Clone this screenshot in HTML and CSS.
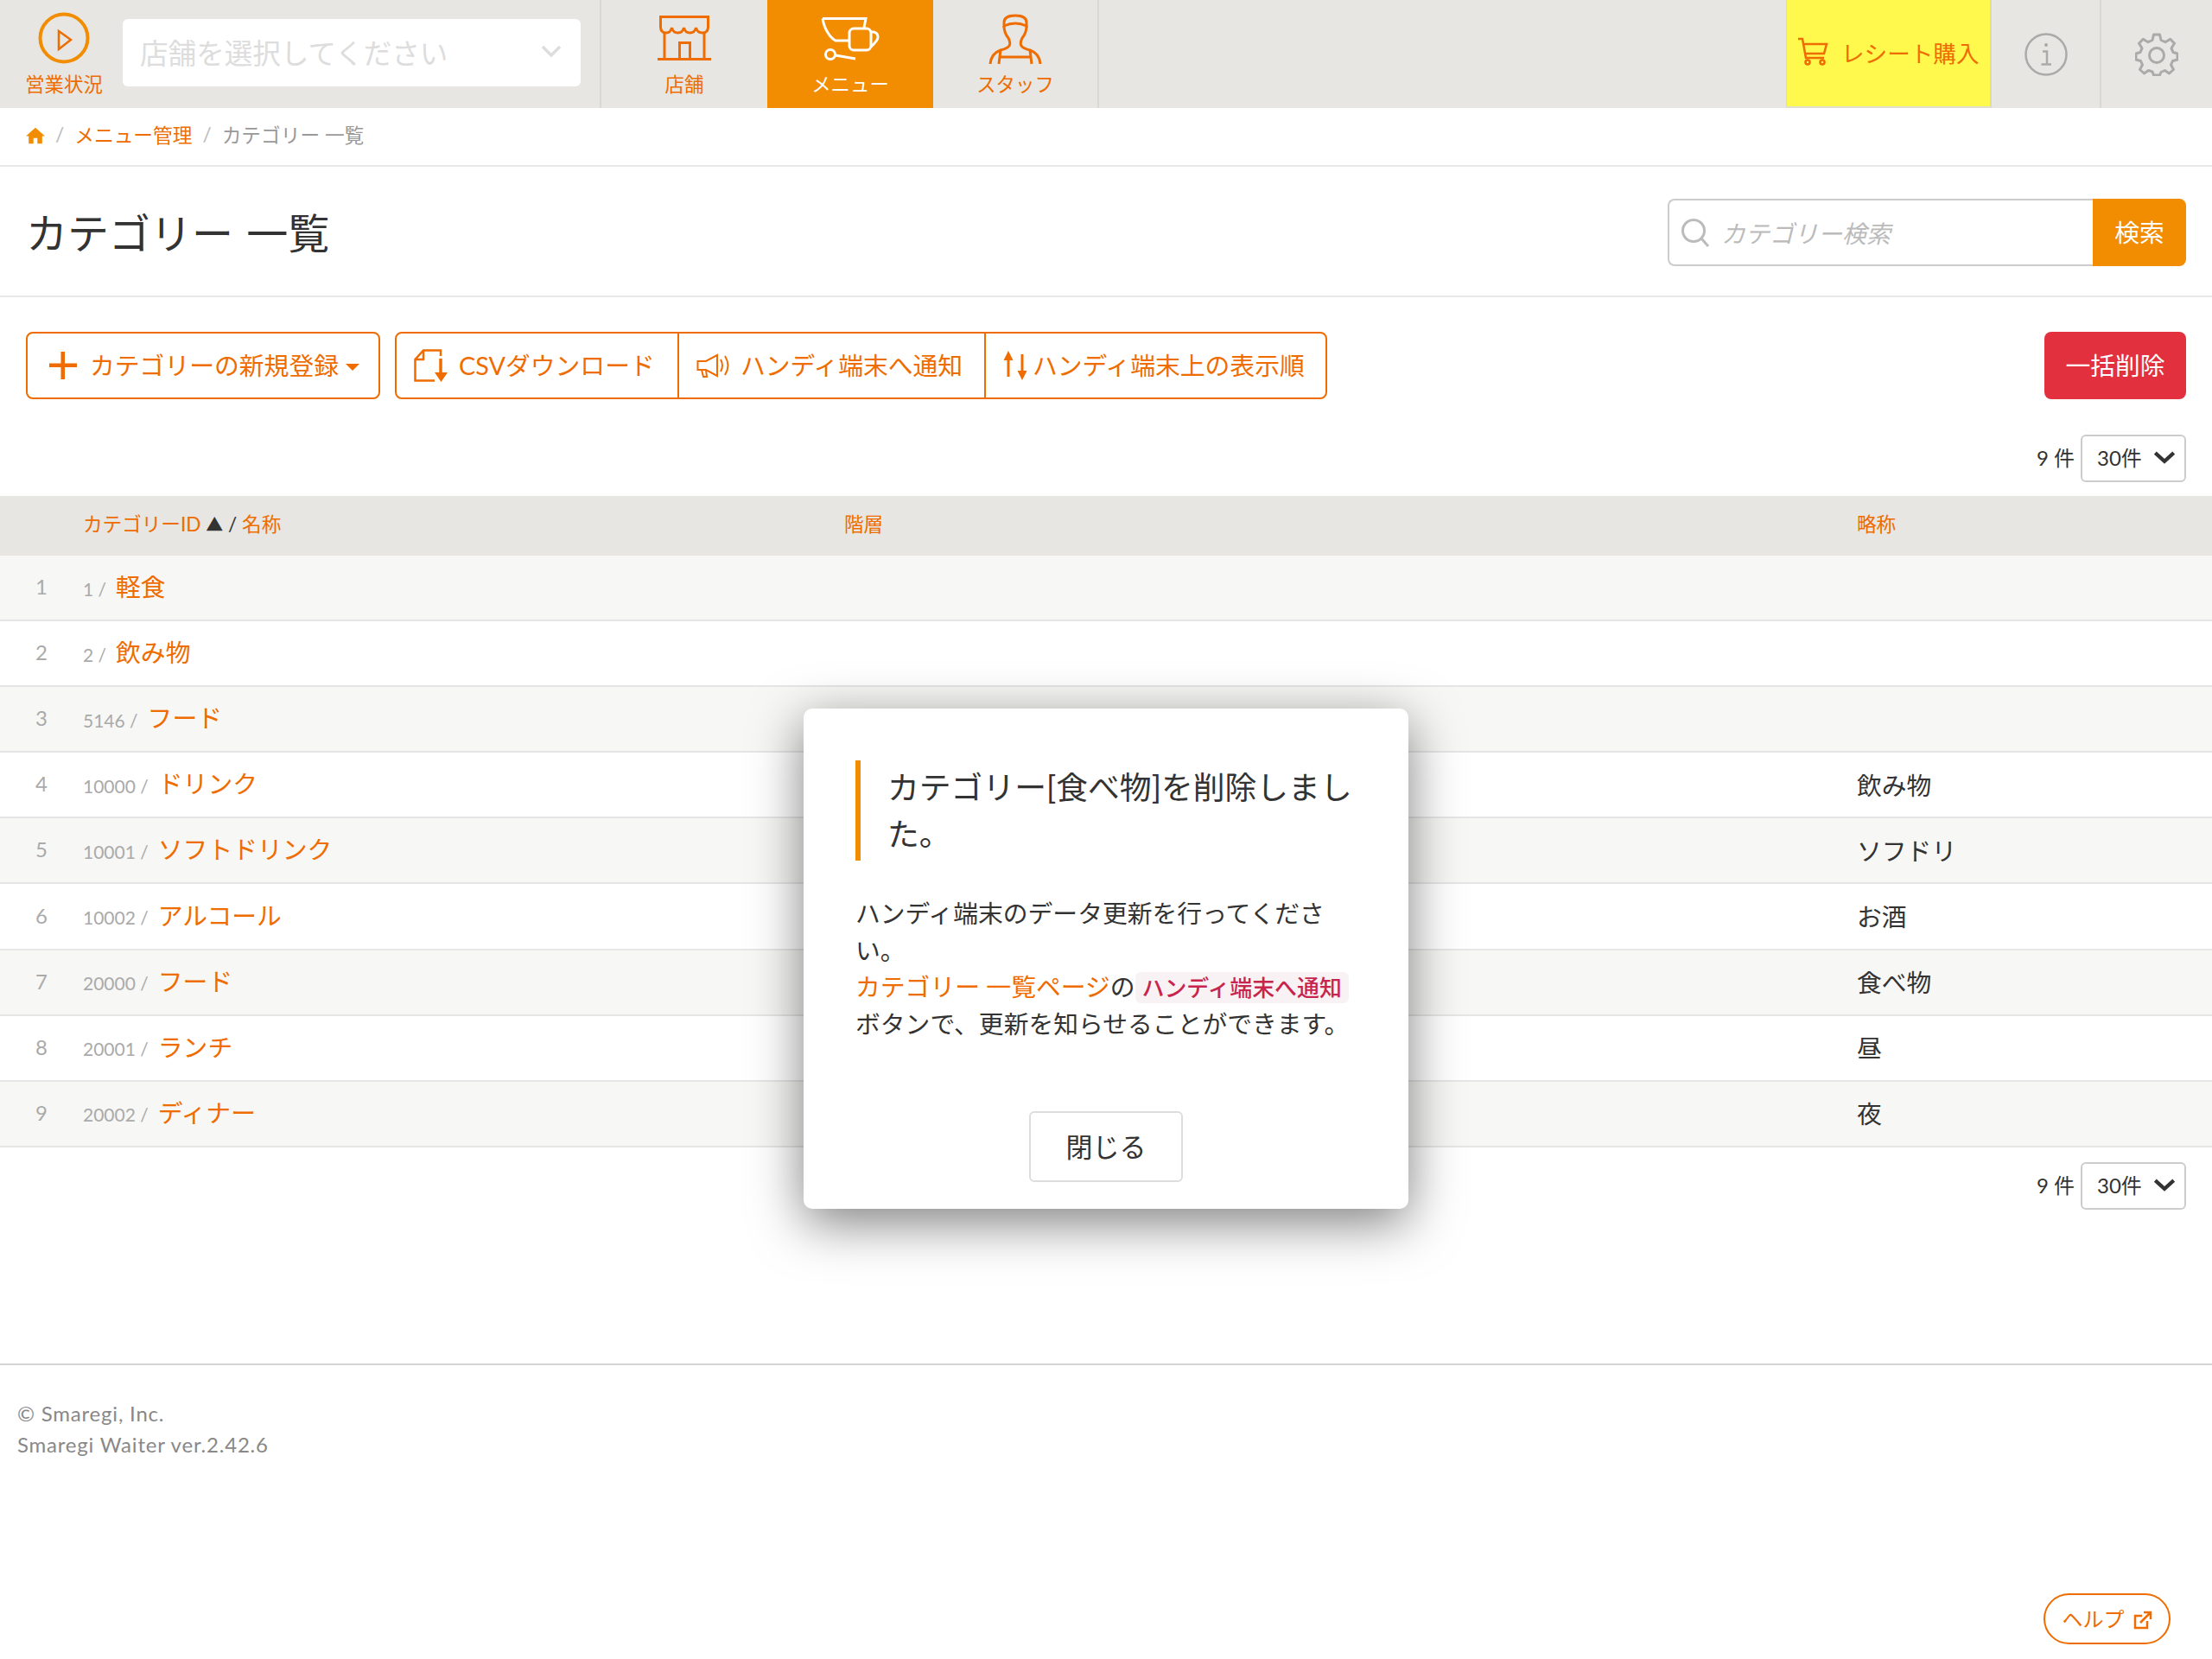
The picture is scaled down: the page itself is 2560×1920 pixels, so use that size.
FILE: index.html
```html
<!DOCTYPE html>
<html lang="ja">
<head>
  <meta charset="UTF-8" />
  <title>カテゴリー 一覧</title>
  <link rel="stylesheet" href="styles.css">
</head>
<body>

<header class="topbar">
  <div class="status">
    <svg class="status-icon" viewBox="0 0 60 60">
      <circle cx="30" cy="30" r="27.5" fill="none" stroke="#f28c00" stroke-width="4"/>
      <path d="M24 22 L38 32 L24 43 Z" fill="none" stroke="#ee6c00" stroke-width="2.5"/>
    </svg>
    <span>営業状況</span>
  </div>
  <div class="store-select">
    <span>店舗を選択してください</span>
    <svg class="store-chevron" viewBox="0 0 24 14"><path d="M2 2 L12 12 L22 2" fill="none" stroke="#ddd" stroke-width="3.5"/></svg>
  </div>
  <nav class="nav">
    <a class="nav-item">
      <svg class="nav-icon" viewBox="0 0 64 60" fill="none" stroke="#ee6c00" stroke-width="3">
        <path d="M4.500 3.500 H59.500 V15 Q59.500 22 53 22 Q47 22 45.500 16 Q44 22 38.500 22 Q33 22 31.500 16 Q30 22 24.500 22 Q19 22 17.500 16 Q16 22 11 22 Q4.500 22 4.500 15 Z"/>
        <path d="M9 22 V52 M55 22 V52 M1 52.500 H63"/>
        <path d="M26.500 52 V33.500 H38.500 V52"/>
      </svg>
      <span>店舗</span>
    </a>
    <a class="nav-item nav-item-active">
      <svg class="nav-icon" viewBox="0 0 70 60" fill="none" stroke="#fff" stroke-width="3">
        <path d="M3 5.500 H53 L51 16 M3 5.500 C5 18 12 28 18 31 H34"/>
        <rect x="34" y="17" width="25" height="25" rx="5"/>
        <path d="M59 21 H62 Q67 22 67 27 Q67 31 59 38"/>
        <circle cx="12" cy="47" r="5.500"/>
        <path d="M18 48 L41 52"/>
      </svg>
      <span>メニュー</span>
    </a>
    <a class="nav-item">
      <svg class="nav-icon" viewBox="0 0 62 60" fill="none" stroke="#ee6c00" stroke-width="3">
        <path d="M18 14 V10 Q18 2 31 2 Q44 2 44 10 V14 Q31 8 18 14 Z"/>
        <path d="M18 14 Q18 22 23 28 Q26 34 24 37 Q22 40 14 42 Q3 46 2 58 M44 14 Q44 22 39 28 Q36 34 38 37 Q40 40 48 42 Q59 46 60 58"/>
        <path d="M14 42 L12 58 M48 42 L50 58 M14 50 H48"/>
      </svg>
      <span>スタッフ</span>
    </a>
  </nav>
  <div class="topbar-right">
    <a class="buy">
      <svg class="buy-icon" viewBox="0 0 36 34" fill="none" stroke="#ee6c00" stroke-width="2.5">
        <path d="M1 2 H6 L10 24 H31 M7.500 8 H34 L31 19 H9"/>
        <circle cx="12" cy="29" r="2.500"/>
        <circle cx="29" cy="29" r="2.500"/>
      </svg>
      <span>レシート購入</span>
    </a>
    <a class="tool">
      <svg class="tool-icon" viewBox="0 0 50 50" fill="none" stroke="#aaa" stroke-width="2.5">
        <circle cx="25" cy="25" r="23.500"/>
        <circle cx="25" cy="14" r="2" fill="#aaa" stroke="none"/>
        <path d="M21 21.500 H26 V36 M19.500 36.500 H31"/>
      </svg>
    </a>
    <a class="tool tool-last">
      <svg class="tool-icon" viewBox="0 0 50 50" fill="none" stroke="#aaa" stroke-width="3">
        <path d="M21.500 2 H28.500 L30 8.500 L35 10.700 L40.700 7.200 L45.500 12.300 L42 17.800 L44 22.500 L49 24 V31 L43.500 32.500 L41.500 37 L44.500 42.500 L39.500 47 L34.500 43.500 L30 45.500 L28.500 49 H21.500 L20 45 L15.500 43.500 L10.500 47 L5.500 42.500 L8.500 37 L6.500 32.500 L1 31 V24 L6 22.500 L8 17.800 L4.500 12.300 L9.300 7.200 L15 10.700 L20 8.500 Z" stroke-linejoin="round"/>
        <circle cx="25" cy="26" r="8.500"/>
      </svg>
    </a>
  </div>
</header>

<div class="breadcrumb">
  <svg class="home-icon" viewBox="0 0 24 20"><path d="M12 0 L24 10.500 H20.500 V20 H14.500 V13 H9.500 V20 H3.500 V10.500 H0 Z" fill="#f28c00"/></svg>
  <span class="crumb-sep">/</span>
  <a class="crumb-link">メニュー管理</a>
  <span class="crumb-sep">/</span>
  <span class="crumb-current">カテゴリー 一覧</span>
</div>

<div class="title-row">
  <h1>カテゴリー 一覧</h1>
  <div class="search">
    <div class="search-box">
      <svg class="search-icon" viewBox="0 0 34 34" fill="none" stroke="#bbb" stroke-width="3">
        <circle cx="15" cy="15" r="12.500"/>
        <path d="M24 24 L32 33"/>
      </svg>
      <span>カテゴリー検索</span>
    </div>
    <a class="search-btn">検索</a>
  </div>
</div>

<div class="toolbar">
  <a class="btn btn-new">
    <svg class="plus-icon" viewBox="0 0 32 32"><path d="M13.500 0 H18 V13.500 H32 V18 H18 V32 H13.500 V18 H0 V13.500 H13.500 Z" fill="#ee6c00"/></svg>
    <span>カテゴリーの新規登録</span>
    <i class="caret"></i>
  </a>
  <div class="btn-group">
    <a class="btn-part btn-csv">
      <svg class="csv-icon" viewBox="0 0 40 38" fill="none" stroke="#ee6c00" stroke-width="2.500">
        <path d="M31 8 V1.500 H11 L1.500 12 V36.500 H24 M11 1.500 V12 H1.500"/>
        <path d="M31 11 V28" stroke-width="3.500"/>
        <path d="M24 27 H39 L31.500 38 Z" fill="#ee6c00" stroke="none"/>
      </svg>
      <span>CSVダウンロード</span>
    </a>
    <a class="btn-part btn-notify">
      <svg class="horn-icon" viewBox="0 0 40 28" fill="none" stroke="#ee6c00" stroke-width="2">
        <path d="M1.500 9 H11 L24 2 V26 L11 19 H1.500 Z M6 19 L8 27 H12 L11 19"/>
        <path d="M28 7 Q32 14 28 21 M33 3 Q40 14 33 25"/>
      </svg>
      <span>ハンディ端末へ通知</span>
    </a>
    <a class="btn-part btn-order">
      <svg class="arrows-icon" viewBox="0 0 30 34" fill="#ee6c00">
        <path d="M6 0 L11.500 11 H7.500 V30 H4.500 V11 H0.500 Z"/>
        <path d="M22 34 L16.500 23 H20.500 V4 H23.500 V23 H27.500 Z"/>
      </svg>
      <span>ハンディ端末上の表示順</span>
    </a>
  </div>
  <a class="btn-delete">一括削除</a>
</div>

<div class="count-row">
  <span>9 件</span>
  <div class="page-size">
    <span>30件</span>
    <svg class="page-chevron" viewBox="0 0 24 14"><path d="M2 2 L12 11 L22 2" fill="none" stroke="#333" stroke-width="4"/></svg>
  </div>
</div>

<div class="list">
  <div class="list-head">
    <span></span>
    <span class="head-name"><a>カテゴリーID</a> <i class="sort-mark">▲</i> / <a>名称</a></span>
    <a>階層</a>
    <a>略称</a>
  </div>
  <div class="list-row"><span class="row-no">1</span><span class="row-name"><small>1 /</small><a>軽食</a></span><span></span><span></span></div>
  <div class="list-row"><span class="row-no">2</span><span class="row-name"><small>2 /</small><a>飲み物</a></span><span></span><span></span></div>
  <div class="list-row"><span class="row-no">3</span><span class="row-name"><small>5146 /</small><a>フード</a></span><span></span><span></span></div>
  <div class="list-row"><span class="row-no">4</span><span class="row-name"><small>10000 /</small><a>ドリンク</a></span><span></span><span class="row-short">飲み物</span></div>
  <div class="list-row"><span class="row-no">5</span><span class="row-name"><small>10001 /</small><a>ソフトドリンク</a></span><span></span><span class="row-short">ソフドリ</span></div>
  <div class="list-row"><span class="row-no">6</span><span class="row-name"><small>10002 /</small><a>アルコール</a></span><span></span><span class="row-short">お酒</span></div>
  <div class="list-row"><span class="row-no">7</span><span class="row-name"><small>20000 /</small><a>フード</a></span><span></span><span class="row-short">食べ物</span></div>
  <div class="list-row"><span class="row-no">8</span><span class="row-name"><small>20001 /</small><a>ランチ</a></span><span></span><span class="row-short">昼</span></div>
  <div class="list-row"><span class="row-no">9</span><span class="row-name"><small>20002 /</small><a>ディナー</a></span><span></span><span class="row-short">夜</span></div>
</div>

<div class="count-row count-row-bottom">
  <span>9 件</span>
  <div class="page-size">
    <span>30件</span>
    <svg class="page-chevron" viewBox="0 0 24 14"><path d="M2 2 L12 11 L22 2" fill="none" stroke="#333" stroke-width="4"/></svg>
  </div>
</div>

<footer class="footer">
  <div>© Smaregi, Inc.</div>
  <div>Smaregi Waiter ver.2.42.6</div>
</footer>

<a class="help">
  <span>ヘルプ</span>
  <svg class="help-icon" viewBox="0 0 22 22" fill="none" stroke="#ee6c00" stroke-width="2.500">
    <path d="M16 12 V20 H2 V6 H10"/>
    <path d="M8 14 L19 3 M12 2 H20 V10"/>
  </svg>
</a>

<div class="modal">
  <h2 class="modal-title">カテゴリー[食べ物]を削除しました。</h2>
  <p class="modal-body">
    ハンディ端末のデータ更新を行ってください。<br>
    <a>カテゴリー 一覧ページ</a>の<code>ハンディ端末へ通知</code><br>
    ボタンで、更新を知らせることができます。
  </p>
  <div class="modal-foot">
    <a class="modal-close">閉じる</a>
  </div>
</div>

</body>
</html>
```

FILE: styles.css
```css
* {
  box-sizing: border-box;
}
body {
  margin: 0;
  min-height: 1920px;
  position: relative;
  font-family: Lato, "Noto Sans CJK JP", sans-serif;
  font-size: 28.8px;
  color: #333;
  background: #fff;
}
a {
  color: #ee6c00;
  text-decoration: none;
}

/* top bar */
.topbar {
  display: flex;
  height: 125px;
  background: #e7e6e2;
}
.status {
  width: 142px;
  padding: 14px 0 0 6px;
  display: flex;
  flex-direction: column;
  align-items: center;
  font-size: 22.4px;
  line-height: 30px;
  color: #ee6c00;
}
.status-icon {
  width: 60px;
  height: 60px;
  margin-bottom: 9px;
}
.store-select {
  width: 530px;
  height: 78px;
  margin-top: 22px;
  padding: 0 20px 4px;
  background: #fff;
  border-radius: 6px;
  display: flex;
  align-items: center;
  justify-content: space-between;
  font-size: 32.6px;
  color: #ddd;
}
.store-chevron {
  width: 24px;
  height: 14px;
  margin-right: 2px;
}
.nav {
  display: flex;
  margin-left: 22px;
  border-left: 2px solid #d8d8d4;
}
.nav-item {
  width: 192px;
  padding-top: 16px;
  display: flex;
  flex-direction: column;
  align-items: center;
  font-size: 22.4px;
  line-height: 30px;
  color: #ee6c00;
}
.nav-item:last-child {
  border-right: 2px solid #d8d8d4;
}
.nav-item-active {
  background: #f28c00;
  color: #fff;
}
.nav-icon {
  height: 60px;
  width: 70px;
  margin-bottom: 7px;
}
.topbar-right {
  margin-left: auto;
  display: flex;
}
.buy {
  width: 238px;
  padding: 0 0 3px 12px;
  display: flex;
  align-items: center;
  gap: 15px;
  background: #fff94d;
  border-left: 1px solid #d8d8d4;
  border-right: 2px solid #d8d8d4;
  border-bottom: 2px solid #e0e0d0;
  font-size: 26.6px;
}
.buy-icon {
  width: 36px;
  height: 34px;
}
.tool {
  width: 125px;
  display: flex;
  align-items: center;
  justify-content: center;
}
.tool-last {
  width: 130px;
  border-left: 2px solid #d8d8d4;
}
.tool-icon {
  width: 50px;
  height: 50px;
}

/* breadcrumb */
.breadcrumb {
  height: 68px;
  padding: 0 30px;
  display: flex;
  align-items: center;
  gap: 12px;
  border-bottom: 2px solid #e8e8e8;
  font-size: 22.7px;
}
.breadcrumb span,
.breadcrumb a {
  padding-bottom: 5px;
}
.home-icon {
  width: 22px;
  height: 20px;
  margin-top: -2px;
}
.crumb-sep {
  color: #bbb;
}
.crumb-current {
  color: #999;
}

/* title */
.title-row {
  height: 151px;
  padding: 2px 30px 0;
  display: flex;
  align-items: center;
  justify-content: space-between;
  border-bottom: 2px solid #e8e8e8;
}
h1 {
  margin: 0;
  padding-bottom: 3px;
  font-size: 48px;
  font-weight: 400;
  word-spacing: 3px;
}
.search {
  display: flex;
  width: 600px;
  height: 78px;
}
.search-box {
  flex: 1;
  padding-left: 13px;
  display: flex;
  align-items: center;
  gap: 13px;
  border: 2px solid #ccc;
  border-right: none;
  border-radius: 8px 0 0 8px;
  font-size: 28px;
  font-style: italic;
  color: #bbb;
}
.search-btn {
  width: 108px;
  padding-bottom: 3px;
  display: flex;
  align-items: center;
  justify-content: center;
  background: #f28c00;
  border-radius: 0 8px 8px 0;
  color: #fff;
}
.search-icon {
  width: 34px;
  height: 34px;
}

/* toolbar */
.toolbar {
  display: flex;
  margin-top: 40px;
  padding: 0 30px;
  height: 78px;
}
.btn {
  width: 410px;
  padding: 0 0 3px 25px;
  display: flex;
  align-items: center;
  border: 2px solid #ee6c00;
  border-radius: 8px;
}
.plus-icon {
  width: 32px;
  height: 32px;
  margin: 3px 15px 0 0;
}
.caret {
  margin: 7px 0 0 8px;
  border-top: 8px solid #ee6c00;
  border-left: 8px solid transparent;
  border-right: 8px solid transparent;
}
.btn-group {
  display: flex;
  width: 1079px;
  margin-left: 17px;
  border: 2px solid #ee6c00;
  border-radius: 8px;
}
.btn-part {
  display: flex;
  align-items: center;
}
.btn-part span {
  padding-bottom: 3px;
}
.btn-csv {
  width: 325px;
  padding-left: 20px;
  gap: 12px;
}
.btn-notify {
  width: 355px;
  padding-left: 20px;
  gap: 11px;
  border-left: 2px solid #ee6c00;
}
.btn-order {
  flex: 1;
  padding-left: 20px;
  gap: 4px;
  border-left: 2px solid #ee6c00;
}
.csv-icon {
  width: 40px;
  height: 38px;
}
.horn-icon {
  width: 40px;
  height: 28px;
}
.arrows-icon {
  width: 30px;
  height: 34px;
}
.btn-delete {
  width: 164px;
  margin-left: auto;
  padding-bottom: 3px;
  display: flex;
  align-items: center;
  justify-content: center;
  background: #e3303f;
  border-radius: 8px;
  color: #fff;
}

/* page size */
.count-row {
  display: flex;
  justify-content: flex-end;
  align-items: center;
  gap: 7px;
  margin: 41px 0 16px;
  padding: 0 30px;
  font-size: 24px;
}
.count-row span {
  padding-bottom: 4px;
}
.count-row-bottom {
  margin: 17px 0 178px;
}
.page-size {
  width: 122px;
  height: 55px;
  padding: 0 10px 0 17px;
  display: flex;
  align-items: center;
  justify-content: space-between;
  border: 2px solid #ccc;
  border-radius: 6px;
}
.page-chevron {
  width: 26px;
  height: 15px;
  margin-bottom: 2px;
}

/* list */
.list-head,
.list-row {
  display: grid;
  grid-template-columns: 96px 881px 1172px 1fr;
  align-items: center;
}
.list-head {
  height: 69px;
  padding-bottom: 6px;
  background: #e7e6e2;
  font-size: 22.6px;
}
.head-name {
  color: #333;
}
.sort-mark {
  font-size: 20px;
  font-style: normal;
}
.list-row {
  height: 76.1px;
  border-bottom: 2px solid #e6e6e6;
}
.list-row:nth-child(even) {
  background: #f7f7f5;
}
.row-no {
  padding-bottom: 3px;
  text-align: center;
  font-size: 24px;
  color: #aaa;
}
.row-short {
  padding-bottom: 2px;
}
.row-name {
  display: flex;
  align-items: center;
  gap: 11px;
  padding-bottom: 5px;
}
.row-name small {
  margin-top: 7px;
  font-size: 21px;
  color: #aaa;
}

/* footer */
.footer {
  padding: 38px 20px;
  border-top: 2px solid #d4d4d4;
  font-size: 24px;
  line-height: 36px;
  letter-spacing: 0.8px;
  color: #888;
}
.help {
  position: absolute;
  left: 2365px;
  top: 1844px;
  width: 147px;
  height: 59px;
  padding-bottom: 2px;
  display: flex;
  align-items: center;
  justify-content: center;
  gap: 10px;
  border: 2px solid #ee6c00;
  border-radius: 30px;
  font-size: 24px;
}
.help-icon {
  width: 22px;
  height: 22px;
  margin-top: 4px;
}

/* modal */
.modal {
  position: absolute;
  left: 930px;
  top: 820px;
  width: 700px;
  height: 579px;
  padding: 60px 60px 31px;
  background: #fff;
  border-radius: 10px;
  box-shadow: 0 16px 60px rgba(0, 0, 0, 0.5);
}
.modal-title {
  margin: 0;
  padding: 4px 0 4px 31px;
  border-left: 6px solid #f28c00;
  font-size: 36.8px;
  font-weight: 400;
  line-height: 54px;
}
.modal-body {
  margin: 40px 0 80px;
  line-height: 42.5px;
}
.modal-body code {
  padding: 2px 8px;
  background: #f8f2f5;
  border-radius: 6px;
  font-family: inherit;
  font-size: 25.9px;
  font-weight: 500;
  line-height: 1;
  color: #c7254e;
}
.modal-foot {
  display: flex;
  justify-content: center;
}
.modal-close {
  width: 178px;
  height: 82px;
  padding-bottom: 4px;
  display: flex;
  align-items: center;
  justify-content: center;
  border: 2px solid #ddd;
  border-radius: 6px;
  font-size: 31px;
  color: #333;
}
```
